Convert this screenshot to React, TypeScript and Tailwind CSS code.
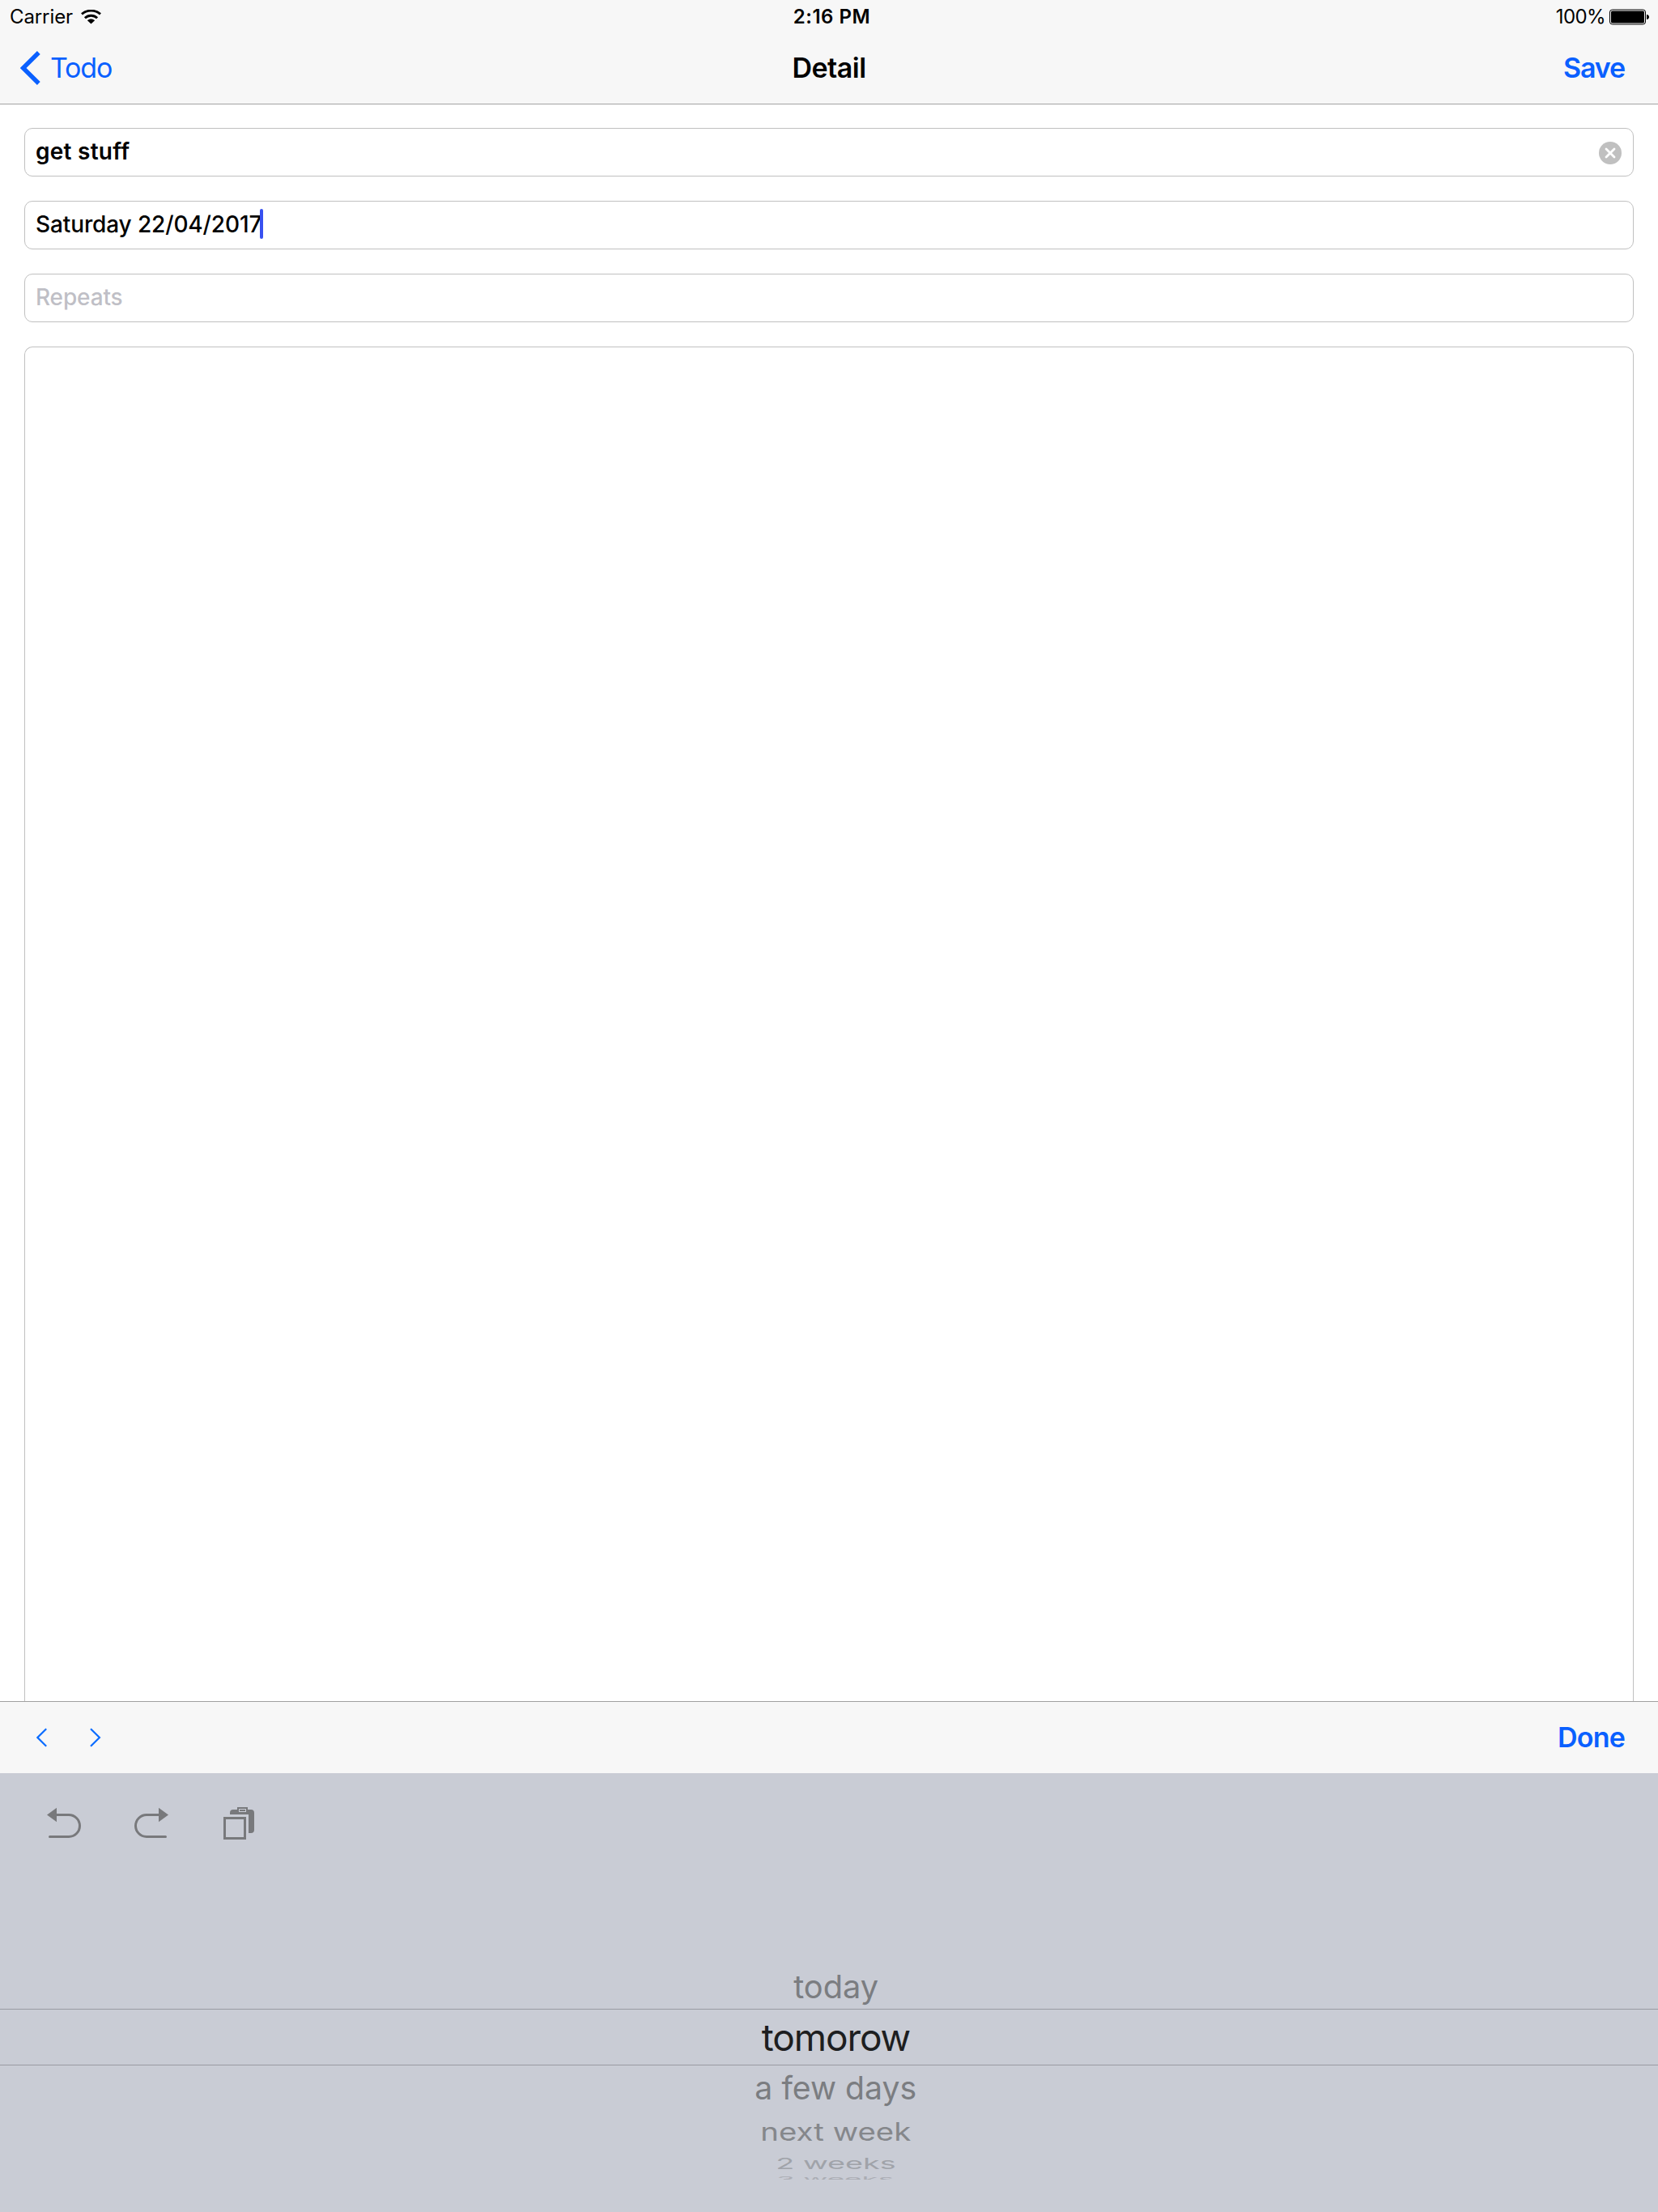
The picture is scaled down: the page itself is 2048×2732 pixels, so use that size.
const FONT = "font-['Inter','Liberation_Sans',sans-serif]";

function StatusBar() {
  return (
    <div className="grid h-10 grid-cols-3 items-center pt-px text-2xl/10 text-black">
      <div className="flex items-center pl-3">
        <span className="tracking-[-0.1px]">Carrier</span>
        <svg className="ml-[10px] h-[18px] w-[25px]" viewBox="0 0 25 18" fill="none" stroke="#000">
          <path d="M1 5.4C7.5 -0.3 17.5 -0.3 24 5.4" strokeWidth="2.9" />
          <path d="M4.9 10.3C9.3 6.3 15.7 6.3 20.1 10.3" strokeWidth="2.9" />
          <path d="M12.5 17.6L7.9 13.2C10.4 10.9 14.6 10.9 17.1 13.2Z" fill="#000" stroke="none" />
        </svg>
      </div>
      <span className="pl-[7px] text-center font-semibold tracking-[0.5px]">2:16 PM</span>
      <div className="flex items-center justify-end pr-[11px]">
        <span className="tracking-[-0.6px]">100%</span>
        <svg className="ml-[5px] h-5 w-[49px]" viewBox="0 0 49 20">
          <rect x="0.5" y="1" width="44" height="18" rx="3" fill="#f7f7f7" stroke="#000" strokeWidth="1" />
          <rect x="2" y="2.5" width="41" height="15" rx="1.5" fill="#000" />
          <path d="M46 7C50 7 50 13 46 13Z" fill="#000" />
        </svg>
      </div>
    </div>
  );
}

function NavBar() {
  return (
    <div className="grid h-[88px] grid-cols-3 items-center text-[34px]/[40px]">
      <button className="flex items-center pl-6 text-[#0a60ff]">
        <svg className="h-[42px] w-[26px]" viewBox="0 0 26 42" fill="none" stroke="currentColor" strokeWidth="5.4">
          <path d="M23.8 2L4.6 21L23.8 40" />
        </svg>
        <span className="ml-3 tracking-[-1.2px]">Todo</span>
      </button>
      <h1 className="text-center font-semibold tracking-[-0.5px]">Detail</h1>
      <button className="pr-[41px] text-right font-semibold tracking-[-1.1px] text-[#0a60ff]">Save</button>
    </div>
  );
}

function Field({ children }: { children: React.ReactNode }) {
  return (
    <div className="flex h-[60px] items-center rounded-[10px] border border-[#c0c0c0] bg-white px-[13px] text-[28px]/[34px]">
      {children}
    </div>
  );
}

function Toolbar() {
  return (
    <div className="flex h-[89px] items-center border-t border-[#a0a0a0] bg-[#f7f7f7] pl-[45px] pr-[41px] text-[#0a6cff]">
      <svg className="-mt-px h-6 w-[14px]" viewBox="0 0 14 24" fill="none" stroke="currentColor" strokeWidth="2.2">
        <path d="M12.2 1.2L1.4 12L12.2 22.8" />
      </svg>
      <svg className="-mt-px ml-[52px] h-6 w-[14px]" viewBox="0 0 14 24" fill="none" stroke="currentColor" strokeWidth="2.2">
        <path d="M1 1.2L11.9 12L1 22.8" />
      </svg>
      <button className="ml-auto text-[34px]/[40px] font-semibold tracking-[-0.8px] text-[#0a60ff]">Done</button>
    </div>
  );
}

function EditActions() {
  return (
    <div className="flex h-[124px] items-center pl-[58px] text-[#78797c]">
      <svg className="h-10 w-[42px]" viewBox="0 0 42 40" fill="none" stroke="currentColor" strokeWidth="3">
        <path d="M0 9.5L12 0.7V18.3Z" fill="currentColor" stroke="none" />
        <path d="M10 9.5H27A13.5 13.5 0 0 1 27 36.5H3.5" strokeLinecap="round" />
      </svg>
      <svg className="ml-[66px] h-10 w-[42px]" viewBox="0 0 42 40" fill="none" stroke="currentColor" strokeWidth="3">
        <path d="M42 9.5L30 0.7V18.3Z" fill="currentColor" stroke="none" />
        <path d="M32 9.5H15A13.5 13.5 0 0 0 15 36.5H38.5" strokeLinecap="round" />
      </svg>
      <svg className="ml-[68px] h-10 w-[38px]" viewBox="0 0 38 40" fill="none">
        <path d="M8 9V7Q8 3 12 3H34Q38 3 38 7V28Q38 32 34 32H31V9Z" fill="currentColor" />
        <rect x="17" y="0" width="13" height="7" fill="currentColor" />
        <rect x="19.5" y="2.5" width="8" height="3" stroke="#c9ccd5" />
        <rect x="1.5" y="13.5" width="25" height="25" stroke="currentColor" strokeWidth="3" />
      </svg>
    </div>
  );
}

function Picker() {
  return (
    <div className="flex flex-1 flex-col items-center pt-[107px] text-center text-[46px] text-[#7b7d81]">
      <div className="flex h-[60px] w-full items-center justify-center pl-[17px]">
        <span className="[transform:translateY(2px)_scale(0.865,0.86)]">today</span>
      </div>
      <div className="flex h-[70px] w-full items-center justify-center border-y border-[#999ba2] pl-[17px] text-[#1d1e20]">
        <span className="tracking-[-1.1px]">tomorow</span>
      </div>
      <div className="flex h-[54px] w-full items-center justify-center pl-4">
        <span className="[transform:scale(0.852,0.86)]">a few days</span>
      </div>
      <div className="flex h-[50px] w-full items-center justify-center pl-4 text-[#85878b]">
        <span className="[transform:translateY(2px)_scale(0.835,0.67)]">next week</span>
      </div>
      <div className="flex h-[32px] w-full items-center justify-center pl-4 text-[#a0a3a9]">
        <span className="[transform:translateY(1px)_scale(0.82,0.41)]">2 weeks</span>
      </div>
      <div className="flex h-[5px] w-full items-start justify-center overflow-hidden pl-4 text-[#abadb4]">
        <span className="origin-top leading-none [transform:scale(0.8,0.2)]">3 weeks</span>
      </div>
    </div>
  );
}

export default function App() {
  return (
    <main className={`${FONT} flex h-[2732px] w-[2048px] flex-col overflow-hidden bg-white text-black`}>
      <header className="h-[129px] border-b border-[#a3a3a3] bg-[#f7f7f7]">
        <StatusBar />
        <NavBar />
      </header>
      <section className="flex h-[1972px] flex-col gap-[30px] px-[30px] pt-[29px]">
        <Field>
          <span className="pb-0.5 font-semibold tracking-[0.25px]">get stuff</span>
          <svg className="ml-auto mt-0.5 mr-px h-7 w-7" viewBox="0 0 28 28">
            <circle cx="14" cy="14" r="14" fill="#c0c0c0" />
            <path d="M9 9L19 19M19 9L9 19" stroke="#fff" strokeWidth="2.8" strokeLinecap="round" />
          </svg>
        </Field>
        <Field>
          <span className="pb-0.5 font-medium tracking-[-0.12px]">Saturday 22/04/2017</span>
          <span className="-ml-0.5 -mt-[3px] h-[37px] w-1 rounded-sm bg-[#3851f0]" />
        </Field>
        <Field>
          <span className="pb-0.5 font-medium tracking-[-0.15px] text-[#bfbfc6]">Repeats</span>
        </Field>
        <div className="flex-1 rounded-t-[10px] border border-b-0 border-[#c0c0c0]" />
      </section>
      <Toolbar />
      <section className="flex flex-1 flex-col bg-[#c9ccd5]">
        <EditActions />
        <Picker />
      </section>
    </main>
  );
}
